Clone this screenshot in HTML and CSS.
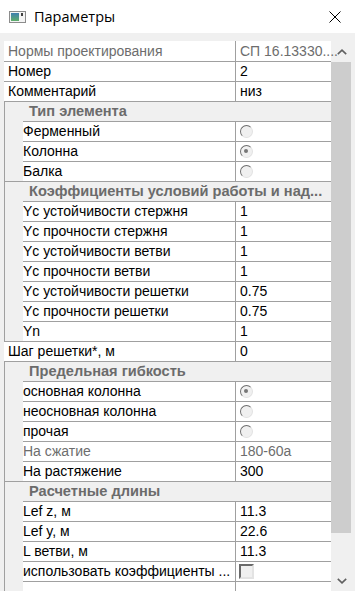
FILE: index.html
```html
<!DOCTYPE html>
<html>
	<head>
		<meta charset="UTF-8">
		<title>Параметры</title>
		<link rel="stylesheet" href="styles.css">
	</head>
	<body>
		<!--заголовок окна-->
		<div class="title">
			<svg class="app-icon" width="17" height="12" viewBox="0 0 17 12">
				<rect x="0.5" y="0.5" width="16" height="11" fill="#f4f4f4" stroke="#8c8c8c"/>
				<defs>
					<linearGradient id="g" x1="0" y1="0" x2="0" y2="1">
						<stop offset="0" stop-color="#3f7fb0"/>
						<stop offset="1" stop-color="#5fae6a"/>
					</linearGradient>
				</defs>
				<rect x="2" y="2" width="8" height="8" fill="url(#g)"/>
				<rect x="12" y="2" width="2" height="3" fill="#404040"/>
			</svg>
			<span class="title-text">Параметры</span>
			<svg class="close" width="12" height="12" viewBox="0 0 12 12">
				<path d="M0.5 0.5 L11.5 11.5 M11.5 0.5 L0.5 11.5" stroke="#000" stroke-width="1"/>
			</svg>
		</div>
		<div class="content">
			<!--сетка свойств-->
			<div class="grid">
				<div class="row first ro"><div class="name">Нормы проектирования</div><div class="val">СП 16.13330....</div></div>
				<div class="row"><div class="name">Номер</div><div class="val">2</div></div>
				<div class="row"><div class="name">Комментарий</div><div class="val">низ</div></div>

				<div class="cat">Тип элемента</div>
				<div class="row sub"><div class="name">Ферменный</div><div class="val"><span class="radio"></span></div></div>
				<div class="row sub"><div class="name">Колонна</div><div class="val"><span class="radio on"></span></div></div>
				<div class="row sub"><div class="name">Балка</div><div class="val"><span class="radio"></span></div></div>

				<div class="cat">Коэффициенты условий работы и над...</div>
				<div class="row sub"><div class="name">Yc устойчивости стержня</div><div class="val">1</div></div>
				<div class="row sub"><div class="name">Yc прочности стержня</div><div class="val">1</div></div>
				<div class="row sub"><div class="name">Yc устойчивости ветви</div><div class="val">1</div></div>
				<div class="row sub"><div class="name">Yc прочности ветви</div><div class="val">1</div></div>
				<div class="row sub"><div class="name">Yc устойчивости решетки</div><div class="val">0.75</div></div>
				<div class="row sub"><div class="name">Yc прочности решетки</div><div class="val">0.75</div></div>
				<div class="row sub"><div class="name">Yn</div><div class="val">1</div></div>

				<div class="row"><div class="name">Шаг решетки*, м</div><div class="val">0</div></div>

				<div class="cat">Предельная гибкость</div>
				<div class="row sub"><div class="name">основная колонна</div><div class="val"><span class="radio on"></span></div></div>
				<div class="row sub"><div class="name">неосновная колонна</div><div class="val"><span class="radio"></span></div></div>
				<div class="row sub"><div class="name">прочая</div><div class="val"><span class="radio"></span></div></div>
				<div class="row sub ro"><div class="name">На сжатие</div><div class="val">180-60а</div></div>
				<div class="row sub"><div class="name">На растяжение</div><div class="val">300</div></div>

				<div class="cat">Расчетные длины</div>
				<div class="row sub"><div class="name">Lef z, м</div><div class="val">11.3</div></div>
				<div class="row sub"><div class="name">Lef y, м</div><div class="val">22.6</div></div>
				<div class="row sub"><div class="name">L ветви, м</div><div class="val">11.3</div></div>
				<div class="row sub"><div class="name">использовать коэффициенты ...</div><div class="val"><span class="check"></span></div></div>
				<div class="row sub"><div class="name"></div><div class="val"></div></div>
			</div>
			<!--полоса прокрутки-->
			<div class="scroll">
				<div class="sbtn">
					<svg width="10" height="6" viewBox="0 0 10 6"><path d="M0.8 5.2 L5 1.2 L9.2 5.2" fill="none" stroke="#606060" stroke-width="1.6"/></svg>
				</div>
				<div class="thumb"></div>
				<div class="track"></div>
				<div class="sbtn">
					<svg width="10" height="6" viewBox="0 0 10 6"><path d="M0.8 0.8 L5 4.8 L9.2 0.8" fill="none" stroke="#606060" stroke-width="1.6"/></svg>
				</div>
			</div>
		</div>
	</body>
</html>
```

FILE: styles.css
```css
*{
	margin: 0;
	padding: 0;
	box-sizing: border-box;
}
body{
	width: 355px;
	height: 591px;
	overflow: hidden;
	background-color: #f0f0f0;
	font-family: "Liberation Sans", Arial, sans-serif;
	font-size: 14px;
	color: #000;
}
/*заголовок*/
.title{
	height: 33px;
	background-color: #fff;
	display: flex;
	align-items: center;
	padding: 0 14px 0 9px;
}
.app-icon{
	margin-top: 1px;
}
.title-text{
	margin-left: 8px;
	font-family: "Open Sans", "Liberation Sans", sans-serif;
	font-size: 14.5px;
	flex: 1;
}
.close{
	margin-top: 1px;
}
.content{
	display: flex;
	padding: 8px 0 0 4px;
}
/*сетка*/
.grid{
	width: 327px;
	background-color: #fff;
}
.row{
	display: flex;
	height: 20px;
	border-top: 1px solid #a0a0a0;
	line-height: 19px;
	white-space: nowrap;
}
.row.first{
	border-top: none;
	height: 20px;
	line-height: 20px;
}
.name{
	flex: none;
	width: 232px;
	border-right: 1px solid #a0a0a0;
	padding-left: 4px;
	overflow: hidden;
}
.val{
	flex: 1;
	padding-left: 4px;
	display: flex;
	align-items: center;
}
.ro{
	color: #6d6d6d;
}
/*строки внутри категории*/
.row.sub{
	border-top: none;
	border-left: 1px solid #a0a0a0;
	padding-left: 18px;
	background-color: #f0f0f0;
}
.sub .name,
.sub .val{
	background-color: #fff;
	border-top: 1px solid #a0a0a0;
}
.sub .name{
	width: 213px;
	padding-left: 0;
}
.cat{
	height: 20px;
	border-top: 1px solid #a0a0a0;
	border-left: 1px solid #a0a0a0;
	background-color: #f0f0f0;
	padding-left: 24px;
	line-height: 19px;
	font-size: 14.6px;
	font-weight: bold;
	color: #6b6b6b;
	white-space: nowrap;
}
/*переключатели*/
.radio{
	width: 13px;
	height: 13px;
	border-radius: 50%;
	background-color: #f0f0f0;
	border: 1.5px solid;
	border-color: #6e6e6e #e2e2e2 #e2e2e2 #6e6e6e;
	position: relative;
}
.radio.on::after{
	content: "";
	position: absolute;
	left: 3px;
	top: 3px;
	width: 4px;
	height: 4px;
	border-radius: 50%;
	background-color: #777;
}
.check{
	width: 15px;
	height: 15px;
	background-color: #f0f0f0;
	border: 2px solid;
	border-color: #6a6a6a #e3e3e3 #e3e3e3 #6a6a6a;
	margin-left: -1px;
}
/*прокрутка*/
.scroll{
	width: 20px;
	height: 550px;
	display: flex;
	flex-direction: column;
}
.sbtn{
	height: 21px;
	display: flex;
	align-items: center;
	justify-content: center;
	padding-left: 2px;
}
.thumb{
	height: 471px;
	background-color: #cdcdcd;
}
.track{
	flex: 1;
}
```
